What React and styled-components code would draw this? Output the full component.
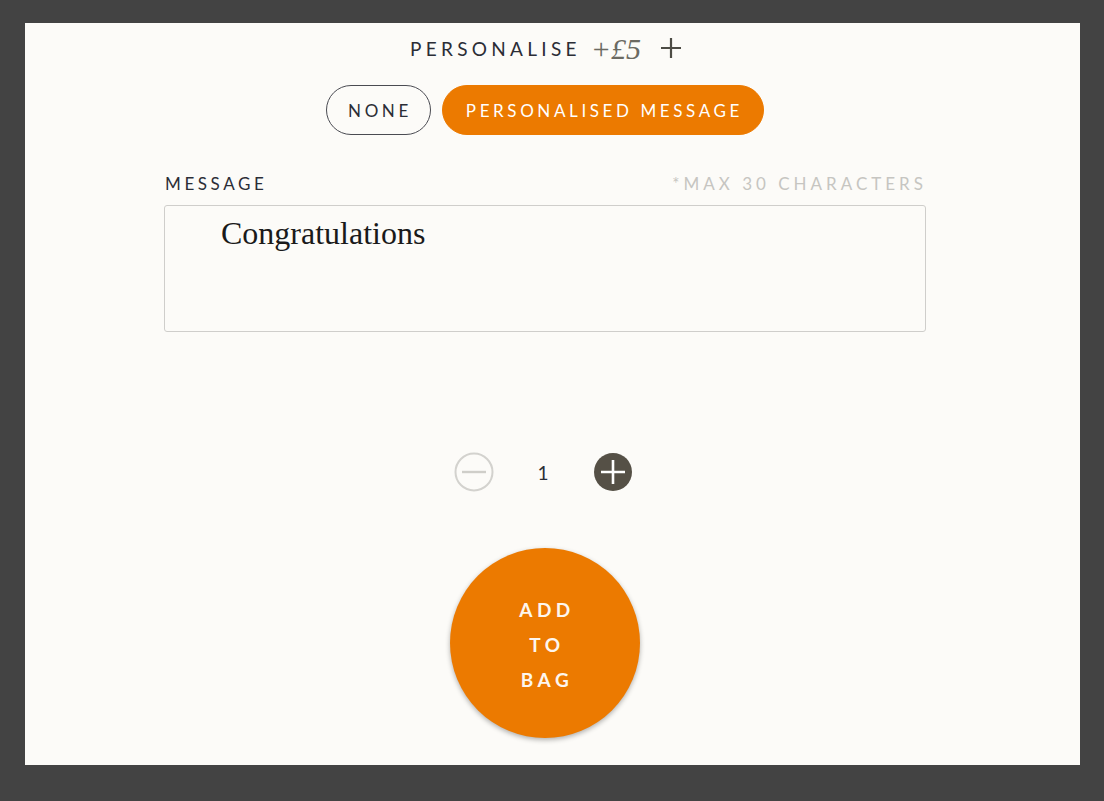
import React, { useState } from 'react';
import styled, { createGlobalStyle } from 'styled-components';

const GlobalStyle = createGlobalStyle`
  html, body {
    margin: 0;
    padding: 0;
    background: #434343;
  }
  body {
    font-family: Lato, "Noto Sans", sans-serif;
  }
`;

const Page = styled.div`
  padding: 23px 24px 36px 25px;
`;

const Panel = styled.div`
  box-sizing: border-box;
  width: 1055px;
  height: 742px;
  background: #fcfbf8;
  padding: 10px 15px 0 0;
  display: flex;
  flex-direction: column;
  align-items: center;
`;

const Heading = styled.div`
  display: flex;
  align-items: center;
  height: 30px;
  gap: 10px;
  margin-left: 3px;
  color: #2b2d36;
`;

const HeadingText = styled.span`
  font-size: 19px;
  letter-spacing: 4.3px;
  text-transform: uppercase;
`;

const Price = styled.span`
  font-family: "Liberation Serif", serif;
  font-style: italic;
  font-size: 30px;
  color: #6b6a62;
  margin-top: 2px;
`;

const PlusGlyph = styled.svg`
  margin-left: 8px;
  display: block;
`;

const Options = styled.div`
  display: flex;
  gap: 11px;
  margin-top: 22px;
`;

const Pill = styled.button`
  height: 50px;
  padding: 0 ${(p) => (p.$active ? '20px' : '18px')} 0 ${(p) => (p.$active ? '23px' : '21px')};
  border-radius: 25px;
  border: 1px solid ${(p) => (p.$active ? '#ec7a00' : '#4a4b52')};
  background: ${(p) => (p.$active ? '#ec7a00' : 'transparent')};
  color: ${(p) => (p.$active ? '#fff' : '#2b2d36')};
  font-family: Lato, "Noto Sans", sans-serif;
  font-size: 17px;
  letter-spacing: 3.6px;
  text-transform: uppercase;
  cursor: pointer;
`;

const Form = styled.div`
  width: 762px;
  margin-top: 38px;
`;

const LabelRow = styled.div`
  display: flex;
  justify-content: space-between;
  align-items: center;
  height: 20px;
  padding-left: 1px;
  font-size: 17px;
  letter-spacing: 3.6px;
  text-transform: uppercase;
`;

const Label = styled.span`
  color: #2b2d36;
`;

const Hint = styled.span`
  color: #c6c5c1;
  letter-spacing: 4px;
  margin-right: -1px;
`;

const MessageBox = styled.textarea`
  display: block;
  box-sizing: border-box;
  width: 100%;
  height: 127px;
  margin-top: 12px;
  padding: 9px 20px 0 56px;
  border: 1px solid #cfcecb;
  border-radius: 3px;
  background: transparent;
  resize: none;
  outline: none;
  color: #1a1a1a;
  font-family: "Liberation Serif", serif;
  font-size: 32px;
`;

const Quantity = styled.div`
  display: flex;
  align-items: center;
  margin: 120px 4px 0 0;
`;

const QtyButton = styled.button`
  width: 40px;
  height: 40px;
  padding: 0;
  border: none;
  background: none;
  cursor: pointer;
  display: flex;
  align-items: center;
  justify-content: center;
`;

const Count = styled.span`
  width: 99px;
  text-align: center;
  font-size: 19px;
  color: #2b2d36;
`;

const BagButton = styled.button`
  box-sizing: border-box;
  width: 190px;
  height: 190px;
  margin-top: 56px;
  border-radius: 50%;
  border: none;
  background: #ec7a00;
  box-shadow: 0 2px 5px rgba(0, 0, 0, 0.3);
  color: #fdf6ee;
  font-family: Lato, "Noto Sans", sans-serif;
  font-weight: 700;
  font-size: 19px;
  letter-spacing: 4.5px;
  line-height: 35px;
  text-transform: uppercase;
  display: flex;
  flex-direction: column;
  align-items: center;
  justify-content: center;
  padding: 2px 0 0 4px;
  cursor: pointer;
`;

const App = () => {
  const [mode, setMode] = useState('message');
  const [qty, setQty] = useState(1);
  const [text, setText] = useState('Congratulations');

  return (
    <Page>
      <GlobalStyle />
      <Panel>
        <Heading>
          <HeadingText>Personalise</HeadingText>
          <Price>+£5</Price>
          <PlusGlyph width="24" height="24" viewBox="0 0 24 24">
            <path d="M12 2v20M2 12h20" stroke="#4d4c45" strokeWidth="2.2" fill="none" />
          </PlusGlyph>
        </Heading>

        <Options>
          <Pill $active={mode === 'none'} onClick={() => setMode('none')}>None</Pill>
          <Pill $active={mode === 'message'} onClick={() => setMode('message')}>Personalised message</Pill>
        </Options>

        <Form>
          <LabelRow>
            <Label>Message</Label>
            <Hint>*Max 30 characters</Hint>
          </LabelRow>
          <MessageBox maxLength={30} value={text} onChange={(e) => setText(e.target.value)} />
        </Form>

        <Quantity>
          <QtyButton onClick={() => setQty(Math.max(1, qty - 1))}>
            <svg width="40" height="40" viewBox="0 0 40 40">
              <circle cx="20" cy="20" r="18.5" fill="none" stroke="#d3d2ce" strokeWidth="2" />
              <path d="M8 20h24" stroke="#cfcec9" strokeWidth="2.4" />
            </svg>
          </QtyButton>
          <Count>{qty}</Count>
          <QtyButton onClick={() => setQty(qty + 1)}>
            <svg width="40" height="40" viewBox="0 0 40 40">
              <circle cx="20" cy="20" r="19" fill="#555046" />
              <path d="M20 8v24M8 20h24" stroke="#fff" strokeWidth="2.6" />
            </svg>
          </QtyButton>
        </Quantity>

        <BagButton>
          <span>Add</span>
          <span>To</span>
          <span>Bag</span>
        </BagButton>
      </Panel>
    </Page>
  );
};

export default App;
